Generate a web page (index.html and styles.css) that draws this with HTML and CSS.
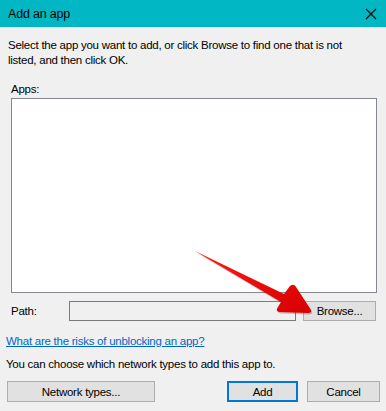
FILE: index.html
```html
<!DOCTYPE html>
<html lang="en">
<head>
  <meta charset="UTF-8" />
  <title>Add an app</title>
  <link rel="stylesheet" href="styles.css">
</head>
<body>
  <div class="dialog">
    <div class="titlebar">
      <span class="title">Add an app</span>
      <svg class="close" width="12" height="12" viewBox="0 0 12 12">
        <path d="M1 1 L11 11 M11 1 L1 11" stroke="#000" stroke-width="1.1" fill="none" />
      </svg>
    </div>

    <div class="body">
      <p class="intro">Select the app you want to add, or click Browse to find one that is not listed, and then click OK.</p>

      <div class="label apps-label">Apps:</div>
      <div class="listbox"></div>

      <div class="path-row">
        <span class="label">Path:</span>
        <div class="path-input"></div>
        <button class="btn browse">Browse...</button>
      </div>

      <a class="link" href="#">What are the risks of unblocking an app?</a>
      <p class="note">You can choose which network types to add this app to.</p>

      <div class="actions">
        <button class="btn network">Network types...</button>
        <div class="right">
          <button class="btn add">Add</button>
          <button class="btn cancel">Cancel</button>
        </div>
      </div>
    </div>

    <!-- red callout arrow pointing at Browse -->
    <svg class="arrow" width="386" height="411" viewBox="0 0 386 411">
      <defs>
        <linearGradient id="red" x1="0" y1="0" x2="1" y2="1">
          <stop offset="0" stop-color="#ff1a1a" />
          <stop offset="1" stop-color="#d60000" />
        </linearGradient>
      </defs>
      <path d="M195 251 L284 294 L290 286 Q294 283 296 287 L311 310 Q312 313 308 313 L279 312 Q275 311 278 307 L281 302 Z"
            fill="#7a0000" opacity="0.25" transform="translate(1 1.5)" />
      <path d="M195 251 L284 294 L290 286 Q294 283 296 287 L311 310 Q312 313 308 313 L279 312 Q275 311 278 307 L281 302 Z"
            fill="url(#red)" />
    </svg>
  </div>
</body>
</html>
```

FILE: styles.css
```css
* {
  box-sizing: border-box;
}

body {
  margin: 0;
  background: #f0f0f0;
  font-family: 'Liberation Sans', Arial, sans-serif;
  font-size: 11.5px;
  letter-spacing: -0.25px;
  color: #000;
}

.dialog {
  position: relative;
  width: 386px;
  height: 411px;
  overflow: hidden;
}

.titlebar {
  height: 27px;
  background: #00b7c3;
  display: flex;
  align-items: center;
  justify-content: space-between;
  padding: 0 9px 0 8px;
}

.title {
  font-size: 12.5px;
  letter-spacing: -0.2px;
}

.body {
  padding: 0 6px;
}

.intro {
  margin: 11px 0 0 2px;
  line-height: 15px;
  width: 352px;
}

.label {
  line-height: 15px;
}

.apps-label {
  margin: 14px 0 0 5px;
}

.listbox {
  margin: 1px 0 0 5px;
  width: 366px;
  height: 195px;
  background: #fff;
  border: 1px solid #828790;
}

.path-row {
  display: flex;
  align-items: center;
  margin: 8px 0 0 5px;
  height: 20px;
}

.path-row .label {
  width: 58px;
}

.path-input {
  width: 227px;
  height: 20px;
  border: 1px solid #7a7a7a;
  background: #f0f0f0;
}

.btn {
  font-family: inherit;
  font-size: 11.5px;
  letter-spacing: -0.25px;
  color: #000;
  background: #e1e1e1;
  border: 1px solid #adadad;
  padding: 0;
  height: 21px;
}

.browse {
  margin-left: 7px;
  width: 73px;
  height: 20px;
}

.link {
  display: block;
  margin-top: 13px;
  color: #0066cc;
  line-height: 15px;
}

.note {
  margin: 8px 0 0;
  line-height: 15px;
}

.actions {
  display: flex;
  justify-content: space-between;
  margin: 9px 0 0 1px;
}

.network {
  width: 148px;
}

.right {
  display: flex;
  gap: 9px;
  margin-right: 0;
}

.add {
  width: 71px;
  border: 2px solid #0078d7;
}

.cancel {
  width: 73px;
}

.arrow {
  position: absolute;
  left: 0;
  top: 0;
  pointer-events: none;
}
```
